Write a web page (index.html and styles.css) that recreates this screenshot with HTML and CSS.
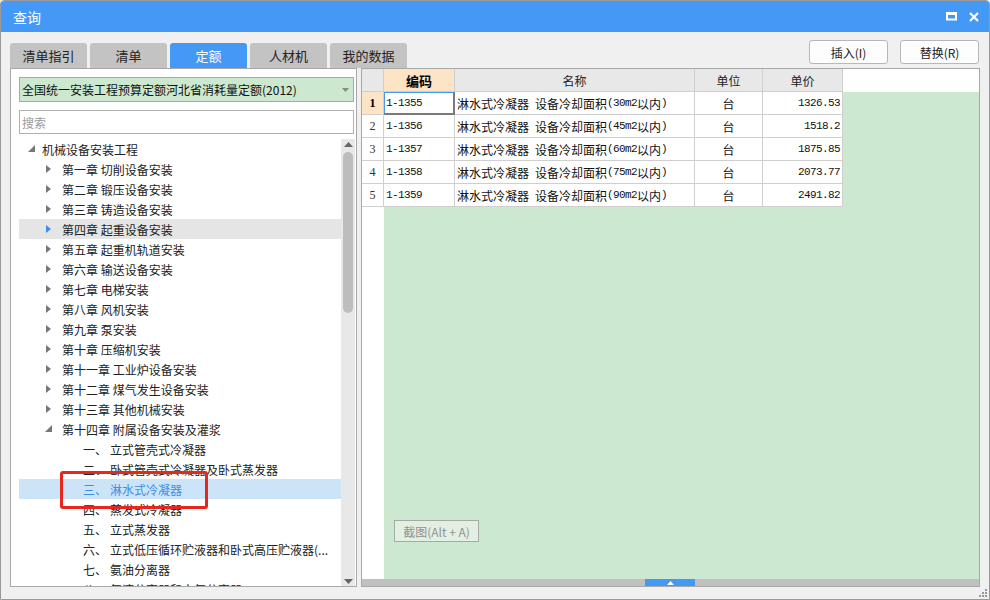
FILE: index.html
```html
<!DOCTYPE html>
<html lang="zh-CN">
<head>
<meta charset="utf-8">
<title>查询</title>
<link rel="stylesheet" href="styles.css">
</head>
<body>
<div class="window">
  <div class="titlebar">
    <span class="title">查询</span>
    <div class="win-btns">
      <svg width="11" height="9" viewBox="0 0 11 9"><rect x="1" y="1.5" width="9" height="6" fill="none" stroke="#fff" stroke-width="2"/><rect x="0" y="0" width="11" height="3" fill="#fff"/></svg>
      <svg width="10" height="10" viewBox="0 0 10 10"><path d="M1 1L9 9M9 1L1 9" stroke="#fff" stroke-width="2.2"/></svg>
    </div>
  </div>

  <div class="toolbar">
    <div class="tabs">
      <div class="tab">清单指引</div>
      <div class="tab">清单</div>
      <div class="tab active">定额</div>
      <div class="tab">人材机</div>
      <div class="tab">我的数据</div>
    </div>
    <div class="actions">
      <button class="btn">插入(I)</button>
      <button class="btn">替换(R)</button>
    </div>
  </div>

  <div class="main">
    <div class="left">
      <div class="select">
        <span>全国统一安装工程预算定额河北省消耗量定额(2012)</span>
        <svg width="7" height="4" viewBox="0 0 7 4"><path d="M0 0H7L3.5 4Z" fill="#888"/></svg>
      </div>
      <div class="search">搜索</div>
      <div class="tree-wrap">
        <div class="tree">
          <div class="row lv0"><svg class="tw" width="7" height="7" viewBox="0 0 7 7"><path d="M7 0V7H0Z" fill="#777"/></svg><span>机械设备安装工程</span></div>
          <div class="row lv1"><svg class="ar" width="5" height="8" viewBox="0 0 5 8"><path d="M0 0L5 4L0 8Z" fill="#777"/></svg><span>第一章 切削设备安装</span></div>
          <div class="row lv1"><svg class="ar" width="5" height="8" viewBox="0 0 5 8"><path d="M0 0L5 4L0 8Z" fill="#777"/></svg><span>第二章 锻压设备安装</span></div>
          <div class="row lv1"><svg class="ar" width="5" height="8" viewBox="0 0 5 8"><path d="M0 0L5 4L0 8Z" fill="#777"/></svg><span>第三章 铸造设备安装</span></div>
          <div class="row lv1 hover"><svg class="ar" width="5" height="8" viewBox="0 0 5 8"><path d="M0 0L5 4L0 8Z" fill="#3a8ef0"/></svg><span>第四章 起重设备安装</span></div>
          <div class="row lv1"><svg class="ar" width="5" height="8" viewBox="0 0 5 8"><path d="M0 0L5 4L0 8Z" fill="#777"/></svg><span>第五章 起重机轨道安装</span></div>
          <div class="row lv1"><svg class="ar" width="5" height="8" viewBox="0 0 5 8"><path d="M0 0L5 4L0 8Z" fill="#777"/></svg><span>第六章 输送设备安装</span></div>
          <div class="row lv1"><svg class="ar" width="5" height="8" viewBox="0 0 5 8"><path d="M0 0L5 4L0 8Z" fill="#777"/></svg><span>第七章 电梯安装</span></div>
          <div class="row lv1"><svg class="ar" width="5" height="8" viewBox="0 0 5 8"><path d="M0 0L5 4L0 8Z" fill="#777"/></svg><span>第八章 风机安装</span></div>
          <div class="row lv1"><svg class="ar" width="5" height="8" viewBox="0 0 5 8"><path d="M0 0L5 4L0 8Z" fill="#777"/></svg><span>第九章 泵安装</span></div>
          <div class="row lv1"><svg class="ar" width="5" height="8" viewBox="0 0 5 8"><path d="M0 0L5 4L0 8Z" fill="#777"/></svg><span>第十章 压缩机安装</span></div>
          <div class="row lv1"><svg class="ar" width="5" height="8" viewBox="0 0 5 8"><path d="M0 0L5 4L0 8Z" fill="#777"/></svg><span>第十一章 工业炉设备安装</span></div>
          <div class="row lv1"><svg class="ar" width="5" height="8" viewBox="0 0 5 8"><path d="M0 0L5 4L0 8Z" fill="#777"/></svg><span>第十二章 煤气发生设备安装</span></div>
          <div class="row lv1"><svg class="ar" width="5" height="8" viewBox="0 0 5 8"><path d="M0 0L5 4L0 8Z" fill="#777"/></svg><span>第十三章 其他机械安装</span></div>
          <div class="row lv1"><svg class="tw" width="7" height="7" viewBox="0 0 7 7"><path d="M7 0V7H0Z" fill="#777"/></svg><span>第十四章 附属设备安装及灌浆</span></div>
          <div class="row lv2"><span class="no">一、</span><span>立式管壳式冷凝器</span></div>
          <div class="row lv2"><span class="no">二、</span><span>卧式管壳式冷凝器及卧式蒸发器</span></div>
          <div class="row lv2 selected"><span class="no">三、</span><span>淋水式冷凝器</span></div>
          <div class="row lv2"><span class="no">四、</span><span>蒸发式冷凝器</span></div>
          <div class="row lv2"><span class="no">五、</span><span>立式蒸发器</span></div>
          <div class="row lv2"><span class="no">六、</span><span>立式低压循环贮液器和卧式高压贮液器(...</span></div>
          <div class="row lv2"><span class="no">七、</span><span>氨油分离器</span></div>
          <div class="row lv2"><span class="no">八、</span><span>氨液分离器和空气分离器</span></div>
        </div>
        <div class="vscroll">
          <svg class="sarrow" width="9" height="5" viewBox="0 0 9 5"><path d="M0 5H9L4.5 0Z" fill="#666"/></svg>
          <div class="vthumb"></div>
          <div class="vspace"></div>
          <svg class="sarrow" width="9" height="5" viewBox="0 0 9 5"><path d="M0 0H9L4.5 5Z" fill="#666"/></svg>
        </div>
        <div class="mark"></div>
      </div>
    </div>

    <div class="right">
      <div class="grid">
        <div class="rownums">
          <div class="rn head"></div>
          <div class="rn cur">1</div>
          <div class="rn">2</div>
          <div class="rn">3</div>
          <div class="rn">4</div>
          <div class="rn">5</div>
        </div>
        <div class="cols">
          <div class="thead">
            <div class="th c1 key">编码</div>
            <div class="th c2">名称</div>
            <div class="th c3">单位</div>
            <div class="th c4">单价</div>
          </div>
          <div class="tbody">
            <div class="tr">
              <div class="td c1 active"><span class="m">1-1355</span></div>
              <div class="td c2">淋水式冷凝器<span class="m"> </span>设备冷却面积<span class="m">(30m2</span>以内<span class="m">)</span></div>
              <div class="td c3">台</div>
              <div class="td c4 num"><span class="m">1326.53</span></div>
            </div>
            <div class="tr">
              <div class="td c1"><span class="m">1-1356</span></div>
              <div class="td c2">淋水式冷凝器<span class="m"> </span>设备冷却面积<span class="m">(45m2</span>以内<span class="m">)</span></div>
              <div class="td c3">台</div>
              <div class="td c4 num"><span class="m">1518.2</span></div>
            </div>
            <div class="tr">
              <div class="td c1"><span class="m">1-1357</span></div>
              <div class="td c2">淋水式冷凝器<span class="m"> </span>设备冷却面积<span class="m">(60m2</span>以内<span class="m">)</span></div>
              <div class="td c3">台</div>
              <div class="td c4 num"><span class="m">1875.85</span></div>
            </div>
            <div class="tr">
              <div class="td c1"><span class="m">1-1358</span></div>
              <div class="td c2">淋水式冷凝器<span class="m"> </span>设备冷却面积<span class="m">(75m2</span>以内<span class="m">)</span></div>
              <div class="td c3">台</div>
              <div class="td c4 num"><span class="m">2073.77</span></div>
            </div>
            <div class="tr">
              <div class="td c1"><span class="m">1-1359</span></div>
              <div class="td c2">淋水式冷凝器<span class="m"> </span>设备冷却面积<span class="m">(90m2</span>以内<span class="m">)</span></div>
              <div class="td c3">台</div>
              <div class="td c4 num"><span class="m">2491.82</span></div>
            </div>
            <div class="shot">截图(Alt + A)</div>
          </div>
        </div>
      </div>
      <div class="hscroll">
        <div class="hthumb"><svg width="7" height="4" viewBox="0 0 7 4"><path d="M0 4H7L3.5 0Z" fill="#fff"/></svg></div>
      </div>
    </div>
  </div>

  <div class="status">
    <svg width="8" height="8" viewBox="0 0 8 8" fill="#999"><rect x="6" y="0" width="2" height="2"/><rect x="3" y="3" width="2" height="2"/><rect x="6" y="3" width="2" height="2"/><rect x="0" y="6" width="2" height="2"/><rect x="3" y="6" width="2" height="2"/><rect x="6" y="6" width="2" height="2"/></svg>
  </div>
</div>
</body>
</html>
```

FILE: styles.css
```css
* { box-sizing: border-box; }
html, body { margin: 0; padding: 0; }
body {
  font-family: "Noto Sans CJK SC", "Noto Sans", sans-serif;
  font-size: 12px;
  color: #222;
  background: #fff;
}
.window {
  width: 990px;
  height: 600px;
  border: 1px solid #9a9a9a;
  border-radius: 4px 4px 0 0;
  background: #f0f0f0;
  display: flex;
  flex-direction: column;
  overflow: hidden;
}
.titlebar {
  height: 31px;
  flex: none;
  background: #4499f7;
  display: flex;
  align-items: center;
  justify-content: space-between;
  padding: 0 10px 0 12px;
}
.title { color: #fff; font-size: 14px; }
.win-btns { display: flex; align-items: center; gap: 12px; }
.win-btns svg { display: block; }

.toolbar {
  height: 36px;
  flex: none;
  display: flex;
  justify-content: space-between;
  align-items: flex-end;
  padding: 0 10px 0 9px;
}
.tabs { display: flex; gap: 3px; }
.tab {
  width: 77px;
  height: 25px;
  background: #c3c3c3;
  border-radius: 3px 3px 0 0;
  display: flex;
  align-items: center;
  justify-content: center;
  font-size: 13px;
  color: #222;
}
.tab.active { background: #4499f7; color: #fff; }
.actions { display: flex; gap: 12px; align-self: flex-start; margin-top: 8px; }
.btn {
  width: 79px;
  height: 24px;
  border: 1px solid #b8b8b8;
  border-radius: 3px;
  background: #fdfdfd;
  font-family: inherit;
  font-size: 12px;
  color: #222;
  padding: 0;
}

.main {
  height: 519px;
  flex: none;
  display: flex;
  gap: 4px;
  padding: 0 9px;
}
.left {
  width: 347px;
  border: 1px solid #a8a8a8;
  background: #fff;
  display: flex;
  flex-direction: column;
  padding: 8px 1px 0 8px;
}
.select {
  width: 335px;
  height: 25px;
  flex: none;
  background: #cce8cf;
  border: 1px solid #a8a8a8;
  display: flex;
  align-items: center;
  justify-content: space-between;
  padding: 0 4px 0 2px;
  font-size: 12px;
  color: #111;
}
.search {
  width: 335px;
  height: 24px;
  flex: none;
  margin-top: 8px;
  border: 1px solid #b0b0b0;
  display: flex;
  align-items: center;
  padding-left: 2px;
  color: #9a9a9a;
}
.tree-wrap {
  flex: 1;
  min-height: 0;
  margin-top: 5px;
  display: flex;
  position: relative;
  overflow: hidden;
}
.tree { width: 322px; flex: none; overflow: hidden; }
.row {
  height: 20px;
  display: flex;
  align-items: center;
  white-space: nowrap;
  color: #222;
}
.row svg { flex: none; }
.lv0 { padding-left: 9px; }
.lv0 .tw { margin-right: 7px; margin-top: -1px; }
.lv1 { padding-left: 27px; }
.lv1 .ar { margin-right: 11px; }
.lv1 .tw { margin-left: -1px; margin-right: 10px; margin-top: -1px; }
.lv2 { padding-left: 64px; }
.lv2 .no { display: inline-block; width: 27px; }
.row.hover { background: #e5e5e5; }
.row.selected { background: #cce4f7; color: #3c8ee6; }

.vscroll {
  width: 14px;
  flex: none;
  background: #e8e8e8;
  display: flex;
  flex-direction: column;
  align-items: center;
  padding: 3px 0 2px;
}
.sarrow { flex: none; display: block; }
.vthumb {
  width: 10px;
  height: 161px;
  margin-top: 5px;
  background: #bdbdbd;
  border-radius: 5px;
  flex: none;
}
.vspace { flex: 1; }
.mark {
  position: absolute;
  left: 41px;
  top: 332px;
  width: 148px;
  height: 38px;
  border: 3px solid #e8261d;
  border-radius: 3px;
}

.right {
  width: 619px;
  border: 1px solid #a8a8a8;
  background: #fff;
  display: flex;
  flex-direction: column;
}
.grid { flex: 1; min-height: 0; display: flex; }
.rownums { width: 22px; flex: none; background: #fff; }
.rn {
  height: 23px;
  border-right: 1px solid #cfcfcf;
  border-bottom: 1px solid #cfcfcf;
  display: flex;
  align-items: center;
  justify-content: center;
  font-family: "Liberation Serif", serif;
  font-size: 12px;
  color: #333;
}
.rn.head { background: #e8e8e8; }
.rn.cur { background: #fde4c6; font-weight: bold; color: #000; }
.cols { flex: 1; display: flex; flex-direction: column; }
.thead { height: 23px; flex: none; display: flex; background: #fff; }
.th {
  height: 23px;
  background: #e8e8e8;
  border-right: 1px solid #cfcfcf;
  border-bottom: 1px solid #cfcfcf;
  display: flex;
  align-items: center;
  justify-content: center;
  color: #222;
}
.th.key { background: #fde4c6; font-weight: bold; font-size: 13px; color: #000; }
.c1 { width: 71px; }
.c2 { width: 240px; }
.c3 { width: 68px; }
.c4 { width: 80px; }
.tbody {
  flex: 1;
  background: #cde8d0;
  display: flex;
  flex-direction: column;
}
.tr { display: flex; height: 23px; flex: none; }
.td {
  height: 23px;
  background: #fff;
  border-right: 1px solid #cfcfcf;
  border-bottom: 1px solid #cfcfcf;
  display: flex;
  align-items: center;
  padding: 0 2px;
  white-space: nowrap;
  color: #111;
  font-size: 12px;
}
.td.c3 { justify-content: center; }
.td.num { justify-content: flex-end; }
.td.active {
  border-right: 2px solid #7a7a7a;
  border-bottom: 2px solid #7a7a7a;
  box-shadow: inset 1px 1px 0 #4499f7;
  padding-top: 1px;
}
.m { font-family: "Liberation Mono", monospace; font-size: 11px; letter-spacing: -0.6px; white-space: pre; }
.shot {
  margin: auto 0 37px 10px;
  width: 85px;
  height: 22px;
  border: 1px solid #a4aaa4;
  background: #e4efe4;
  color: #8c938c;
  display: flex;
  align-items: center;
  justify-content: center;
  font-size: 12px;
  align-self: flex-start;
}
.hscroll {
  height: 7px;
  flex: none;
  background: #c0c0c0;
  padding-left: 283px;
}
.hthumb {
  width: 50px;
  height: 7px;
  background: #4499f7;
  display: flex;
  align-items: flex-end;
  justify-content: center;
  padding-bottom: 1px;
}
.hthumb svg { display: block; }
.status {
  flex: 1;
  display: flex;
  justify-content: flex-end;
  align-items: flex-end;
  padding: 0 2px 2px 0;
}
.status svg { display: block; }
```
